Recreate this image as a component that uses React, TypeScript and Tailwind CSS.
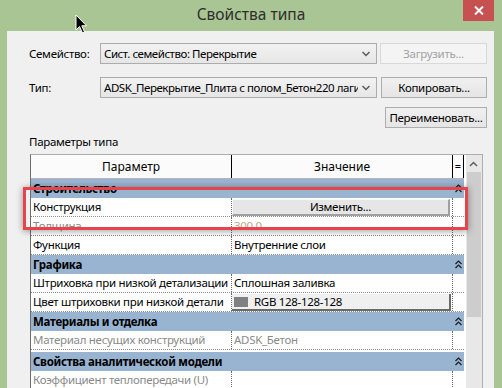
import React from "react";

const font = { fontFamily: '"Noto Sans", "Liberation Sans", sans-serif' };

function Chevron() {
  return (
    <svg width="8" height="6" viewBox="0 0 8 6" className="shrink-0">
      <path d="M0.5 1 L4 4.5 L7.5 1" fill="none" stroke="#5a5a5a" strokeWidth="1.5" />
    </svg>
  );
}

function Collapse() {
  return (
    <svg width="7" height="9" viewBox="0 0 7 9">
      <path d="M0.5 4 L3.5 1 L6.5 4 M0.5 8 L3.5 5 L6.5 8" fill="none" stroke="#1a1a1a" strokeWidth="1.2" />
    </svg>
  );
}

function Combo({ text }: { text: string }) {
  return (
    <div className="ml-[93px] w-[277px] h-[21px] border border-[#acacac] bg-gradient-to-b from-[#f2f2f2] to-[#e6e6e6] flex items-center pl-[3px] pr-[6px] gap-[4px]">
      <span className="flex-1 overflow-hidden whitespace-nowrap text-[11.5px] tracking-[-0.45px] text-black">{text}</span>
      <Chevron />
    </div>
  );
}

function Btn({ text, width, disabled }: { text: string; width: string; disabled?: boolean }) {
  return (
    <div
      className={`${width} h-[21px] flex items-center justify-center text-[11.5px] border ${
        disabled ? "border-[#d9d9d9] bg-[#f4f4f4] text-[#a3a3a3]" : "border-[#adadad] bg-gradient-to-b from-[#f0f0f0] to-[#e5e5e5] text-black"
      }`}
    >
      {text}
    </div>
  );
}

function Group({ title }: { title: string }) {
  return (
    <div className="h-[19px] bg-[#99b4d1] flex items-center">
      <span className="flex-1 pl-[2px] text-[11.5px] font-bold text-black whitespace-nowrap">{title}</span>
      <div className="w-[11px] flex justify-center">
        <Collapse />
      </div>
    </div>
  );
}

function Row({ label, children, grey }: { label: string; children?: React.ReactNode; grey?: boolean }) {
  return (
    <div className="h-[19px] flex border-b border-dotted border-[#8c8c8c] bg-white">
      <div
        className={`w-[201px] shrink-0 border-r border-dotted border-[#6a6a6a] pl-[2px] text-[11.5px] whitespace-nowrap overflow-hidden leading-[18px] ${
          grey ? "text-[#8a8a8a]" : "text-black"
        }`}
      >
        {label}
      </div>
      <div className="w-[221px] shrink-0 border-r border-dotted border-[#6a6a6a] text-[11.5px] leading-[18px] whitespace-nowrap overflow-hidden">
        {children}
      </div>
      <div className="w-[11px] shrink-0" />
    </div>
  );
}

export default function App() {
  return (
    <div className="relative w-[502px] h-[388px] overflow-hidden bg-[#a9c593] flex flex-col tracking-[-0.3px]" style={font}>
      <div className="h-[31px] shrink-0 relative flex items-center justify-center">
        <span className="text-[15.5px] text-[#2e2e2e] -mt-[2px] tracking-normal">Свойства типа</span>
        <div className="absolute top-0 right-[8px] w-[31px] h-[21px] bg-[#c75050] flex items-center justify-center">
          <svg width="10" height="9" viewBox="0 0 10 9">
            <path d="M1 0.5 L9 8.5 M9 0.5 L1 8.5" stroke="white" strokeWidth="2" />
          </svg>
        </div>
      </div>

      <div className="flex-1 ml-[7px] mr-[8px] bg-[#f0f0f0] flex flex-col">
        <div className="mt-[12px] flex items-center">
          <span className="absolute left-[29px] text-[11.5px] text-black">Семейство:</span>
          <Combo text="Сист. семейство: Перекрытие" />
          <div className="ml-[3px]">
            <Btn text="Загрузить..." width="w-[107px]" disabled />
          </div>
        </div>
        <div className="mt-[13px] flex items-center">
          <span className="absolute left-[29px] text-[11.5px] text-black">Тип:</span>
          <Combo text="ADSK_Перекрытие_Плита с полом_Бетон220 лаги" />
          <div className="ml-[4px]">
            <Btn text="Копировать..." width="w-[106px]" />
          </div>
        </div>
        <div className="mt-[9px] flex justify-end pr-[7px]">
          <Btn text="Переименовать..." width="w-[102px]" />
        </div>
        <div className="mt-[5px] pl-[22px] text-[11.5px] text-black leading-[17px]">Параметры типа</div>
        <div className="mt-[4px] ml-[23px] mr-[11px] flex-1 border-t border-l border-r border-t-[#adadad] border-l-[#6e6e6e] border-r-[#adadad] bg-white flex">
          <div className="w-[433px] flex flex-col">
            <div className="h-[24px] flex border-b border-[#b4b4b4] bg-[#fbfbfb] text-[12px] text-black tracking-normal">
              <div className="w-[201px] border-r border-black flex items-center justify-center">Параметр</div>
              <div className="w-[221px] border-r border-black flex items-center justify-center">Значение</div>
              <div className="w-[11px] border-r border-black flex items-center justify-center text-[11px]">=</div>
            </div>
            <Group title="Строительство" />
            <Row label="Конструкция">
              <div className="h-[17px] mt-[1px] mr-[2px] bg-[#e6e6e6] border-r-2 border-b-2 border-[#a0a0a0] border-t border-l border-t-[#f8f8f8] border-l-[#f8f8f8] flex items-center justify-center leading-none">
                Изменить...
              </div>
            </Row>
            <Row label="Толщина" grey>
              <span className="pl-[2px] text-[#c4a488]">300.0</span>
            </Row>
            <Row label="Функция">
              <span className="pl-[2px]">Внутренние слои</span>
            </Row>
            <Group title="Графика" />
            <Row label="Штриховка при низкой детализации">
              <span className="pl-[2px]">Сплошная заливка</span>
            </Row>
            <Row label="Цвет штриховки при низкой детали">
              <div className="h-[17px] mt-[1px] mr-[1px] bg-[#f0f0f0] border-r-2 border-b-2 border-[#6a6a6a] flex items-center gap-[6px] pl-[2px] leading-none">
                <div className="w-[14px] h-[10px] bg-[#808080]" />
                <span>RGB 128-128-128</span>
              </div>
            </Row>
            <Group title="Материалы и отделка" />
            <Row label="Материал несущих конструкций" grey>
              <span className="pl-[2px] text-[#8a8a8a]">ADSK_Бетон</span>
            </Row>
            <div className="h-[2px] bg-white" />
            <Group title="Свойства аналитической модели" />
            <Row label="Коэффициент теплопередачи (U)" grey />
          </div>
          <div className="w-[2px] bg-white" />
          <div className="w-[17px] bg-[#e8e8e8] flex flex-col">
            <div className="h-[17px] flex items-center justify-center">
              <svg width="9" height="6" viewBox="0 0 9 6">
                <path d="M1 5 L4.5 1.5 L8 5" fill="none" stroke="#606060" strokeWidth="1.5" />
              </svg>
            </div>
            <div className="mx-[1px] h-[145px] bg-[#cdcdcd]" />
          </div>
        </div>
      </div>

      <div className="absolute left-[23px] top-[187px] w-[445px] h-[43px] border-[3px] border-[#e8434b] shadow-[0_1px_7px_rgba(0,0,0,0.4)]" />

      <svg className="absolute left-[75px] top-[14px]" width="13" height="20" viewBox="0 0 13 20">
        <path d="M1 1 L1 16 L4.5 12.5 L7.5 19 L9.5 18 L6.8 11.8 L11.5 11.8 Z" fill="black" stroke="white" strokeWidth="1" />
      </svg>
    </div>
  );
}
